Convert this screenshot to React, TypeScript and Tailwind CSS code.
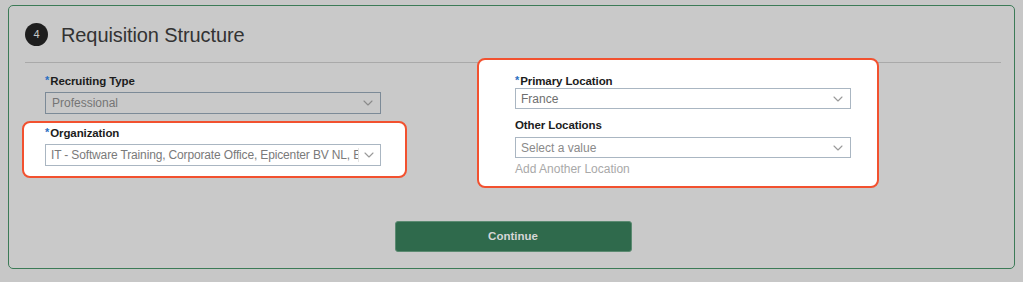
import React from "react";

const Chevron = ({ color = "#8a8a8a" }: { color?: string }) => (
  <svg width="10" height="6" viewBox="0 0 10 6" fill="none" className="shrink-0">
    <path d="M1 1l4 4 4-4" stroke={color} strokeWidth="1.1" strokeLinecap="round" strokeLinejoin="round" />
  </svg>
);

const Label = ({ text, required }: { text: string; required?: boolean }) => (
  <div className="h-[14px] leading-[14px] text-[11.5px] font-bold text-[#1c1c1c] flex items-end tracking-[-0.1px]">
    {required && <span className="text-[#2a6fc2] text-[11px] leading-[10px] mr-[1px] self-start mt-[1px]">*</span>}
    <span>{text}</span>
  </div>
);

export default function App() {
  return (
    <div
      className="w-[1023px] h-[282px] bg-[#c7c7c7] pt-[5px] px-[8px] overflow-hidden"
      style={{ fontFamily: '"Liberation Sans", Arial, sans-serif' }}
    >
      <div className="h-[264px] border border-[#3c7b57] rounded-[5px] bg-[#c9c9c9] pl-[16px] pr-[13px]">
        {/* header */}
        <div className="h-[56px] flex items-center gap-[13px] pt-[1px]">
          <div className="w-[23px] h-[23px] rounded-full bg-[#1e1e1e] flex items-center justify-center text-[11px] text-[#c8c8c8]">
            4
          </div>
          <div className="text-[20px] text-[#333333] tracking-[-0.1px]">
            Requisition Structure
          </div>
        </div>
        <div className="h-[1px] bg-[#a9a9a9]" />

        {/* body */}
        <div className="flex items-start">
          {/* left column */}
          <div className="ml-[20px] w-[336px] shrink-0 pt-[11px]">
            <Label text="Recruiting Type" required />
            <div className="mt-[4px] h-[22px] border border-[#7c8a97] bg-[#c9c9c9] flex items-center justify-between pl-[6px] pr-[7px]">
              <span className="text-[12px] text-[#757575]">Professional</span>
              <Chevron />
            </div>
            <div className="mt-[7px] -ml-[23px] w-[385px] border-2 border-[#f2512f] rounded-[8px] bg-white pl-[21px] pr-[24px] pt-[3px] pb-[10px]">
              <Label text="Organization" required />
              <div className="mt-[4px] h-[22px] border border-[#aab6c2] bg-white flex items-center pl-[5px] pr-[6px]">
                <div className="flex-1 min-w-0 overflow-hidden text-[12px] leading-[20px] text-[#7a7a7a] whitespace-nowrap tracking-[-0.15px]">
                  IT - Software Training, Corporate Office, Epicenter BV NL, E
                </div>
                <div className="pl-[5px] h-[14px] flex items-center border-l border-[#e3e3e3]">
                  <Chevron color="#9a9a9a" />
                </div>
              </div>
            </div>
          </div>

          {/* right column */}
          <div className="ml-[96px] -mt-[5px] relative z-10 w-[402px] shrink-0 border-2 border-[#f2512f] rounded-[8px] bg-white pl-[36px] pr-[26px] pt-[14px] pb-[10px]">
            <Label text="Primary Location" required />
            <div className="h-[21px] border border-[#aab6c2] bg-white flex items-center justify-between pl-[5px] pr-[7px]">
              <span className="text-[12px] text-[#6e6e6e]">France</span>
              <Chevron color="#9a9a9a" />
            </div>
            <div className="mt-[9px]">
              <Label text="Other Locations" />
            </div>
            <div className="mt-[5px] h-[21px] border border-[#aab6c2] bg-white flex items-center justify-between pl-[5px] pr-[7px]">
              <span className="text-[12px] text-[#8a8a8a]">Select a value</span>
              <Chevron color="#9a9a9a" />
            </div>
            <div className="mt-[4px] h-[14px] leading-[14px] text-[12px] text-[#a9a9a9]">Add Another Location</div>
          </div>
        </div>

        {/* button */}
        <div className="flex justify-center mt-[33px]">
          <div className="w-[237px] h-[31px] rounded-[3px] bg-[#2f6a4c] border border-[#5b8a71] flex items-center justify-center text-[11.5px] font-bold text-[#d6d6d6]">
            Continue
          </div>
        </div>
      </div>
    </div>
  );
}
